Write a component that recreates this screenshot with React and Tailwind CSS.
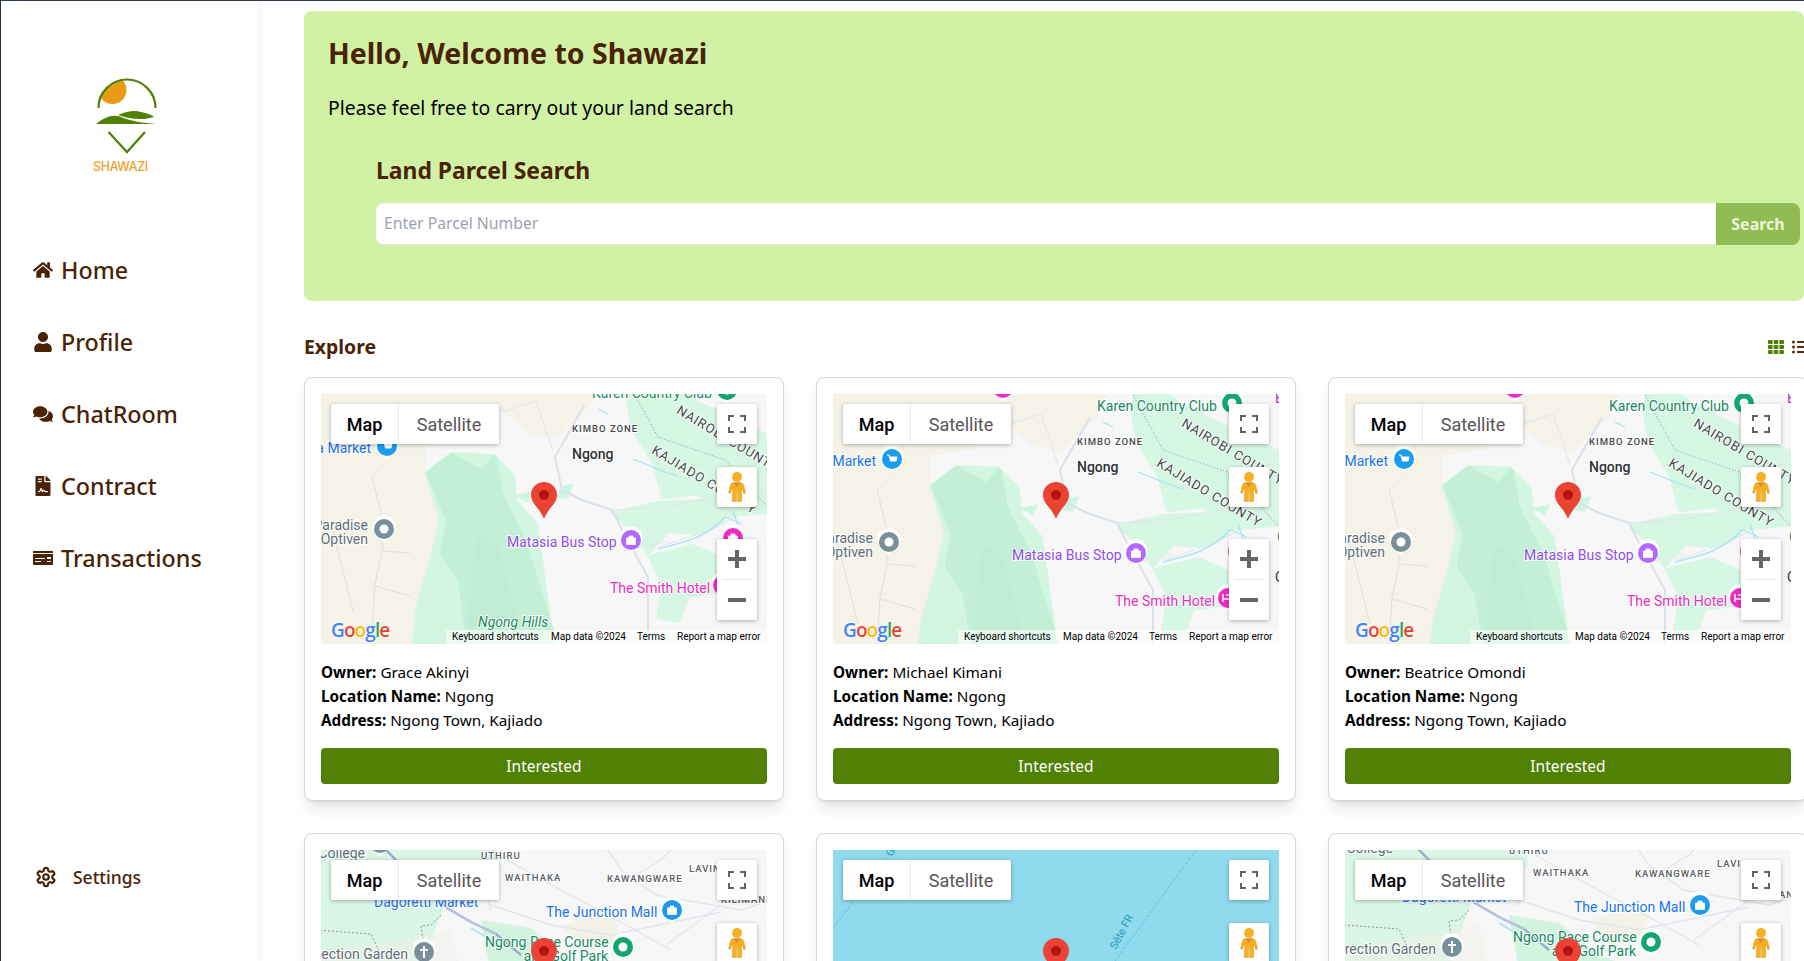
import React from "react";
import { FaHome, FaUser, FaComments, FaFileContract, FaMoneyCheck, FaTh, FaListUl } from "react-icons/fa";
import { LuSettings } from "react-icons/lu";

function Logo() {
  return (
    <div className="flex flex-col items-start pl-[92px] pt-[76px]">
      <svg width="66" height="80" viewBox="0 0 66 80">
        <defs>
          <clipPath id="sunclip"><circle cx="34" cy="31" r="28" /></clipPath>
        </defs>
        <g clipPath="url(#sunclip)"><circle cx="19.5" cy="13" r="14" fill="#e99a17" /></g>
        <path d="M5.5 31 A28 28 0 0 1 62.5 31" fill="none" stroke="#508104" strokeWidth="2.2" />
        <path d="M3 47 C12 40 20 37 28 40 C38 44 50 46 63 47 Z" fill="#508104" />
        <path d="M25 38 C34 34 42 33 48 35 C54 36 59 38 61 40 C52 43 38 43 25 38 Z" fill="#508104" />
        <path d="M15.5 55 L34 75 L52 55" fill="none" stroke="#508104" strokeWidth="2.2" />
      </svg>
      <span className="mt-[2px] font-['Inter'] text-[12.4px] font-medium leading-[16px] tracking-[-0.3px] text-[#efa128]">SHAWAZI</span>
    </div>
  );
}

const NAV = [
  [FaHome, "Home"],
  [FaUser, "Profile"],
  [FaComments, "ChatRoom"],
  [FaFileContract, "Contract"],
  [FaMoneyCheck, "Transactions"],
];

function Sidebar() {
  return (
    <aside className="relative z-10 flex h-full w-[256px] shrink-0 flex-col bg-white shadow-[4px_0_8px_rgba(0,0,0,0.04)]">
      <Logo />
      <nav className="mt-[77px] flex flex-col gap-[36px] pl-[32px]">
        {NAV.map(([Icon, label]) => (
          <div key={label} className="flex h-[36px] items-center gap-[8px] text-[#4a2306]">
            <span className="flex w-[20px] justify-center"><Icon size={20} /></span>
            <span className="text-[23.3px] font-medium leading-[36px]">{label}</span>
          </div>
        ))}
      </nav>
      <div className="mt-auto mb-[72px] flex items-center gap-[16px] pl-[34px] text-[#4a2306]">
        <LuSettings size={22} strokeWidth={2.4} />
        <span className="text-[17.5px] font-medium leading-[24px]">Settings</span>
      </div>
    </aside>
  );
}

function Poi({ x, y, color, glyph }) {
  return (
    <g transform={`translate(${x} ${y})`}>
      <path d="M-11 1 A11.5 11.5 0 1 1 11 1 C9 6 4 9 0 13.5 C-4 9 -9 6 -11 1 Z" fill="#fff" opacity="0.95" />
      <circle r="10" fill={color} />
      {glyph === "dot" && <circle r="4.5" fill="#fff" />}
      {glyph === "shop" && <path d="M-5 -4 H-3 L-1.5 2 H4 L5 -2 H-2.5" fill="#fff" stroke="#fff" strokeWidth="1" />}
      {glyph === "bag" && <path d="M-4.5 -2 H4.5 V4.5 H-4.5 Z M-2 -2 V-4 H2 V-2" fill="#fff" stroke="#fff" strokeWidth="0.8" />}
      {glyph === "cross" && <path d="M-1 -6 H1 V-3 H4 V-1 H1 V6 H-1 V-1 H-4 V-3 H-1 Z" fill="#fff" />}
      {glyph === "golf" && <circle r="4.5" fill="#fff" />}
      {glyph === "bed" && <path d="M-5 -4 V4 M-5 1 H5 V4 M-2 -3 H4 V1" fill="none" stroke="#fff" strokeWidth="1.6" />}
    </g>
  );
}

function Lbl({ x, y, c = "#5f6368", s = 14, w = 400, ls, t, i, rot, anchor }) {
  return (
    <text
      x={x}
      y={y}
      fill={c}
      fontSize={s}
      fontWeight={w}
      fontStyle={i ? "italic" : "normal"}
      letterSpacing={ls}
      textAnchor={anchor}
      transform={rot ? `rotate(${rot} ${x} ${y})` : undefined}
      dominantBaseline="central"
      stroke="#fff"
      strokeWidth="2"
      strokeOpacity="0.85"
      paintOrder="stroke"
      fontFamily="Roboto, sans-serif"
    >
      {t}
    </text>
  );
}

function NgongScene({ hills }) {
  return (
    <g>
      <rect x="-30" y="-30" width="520" height="320" fill="#f7f7f7" />
      <path d="M-30 -30 H290 L262 25 L228 58 L200 52 L180 34 L150 24 L140 55 L97 62 L97 91 L117 139 L104 169 L87 229 L82 290 H-30 Z" fill="#f5f2e8" />
      <path d="M100 92 L124 74 L165 76 L184 95 L186 120 L207 144 L227 290 L85 290 L90 229 L107 169 L114 139 Z" fill="#d2f6e2" stroke="#d2f6e2" strokeWidth="6" strokeLinejoin="round" />
      <path d="M100 92 L124 74 L154 91 L166 76 L173 113 L196 160 L224 250 L139 250 L132 200 L114 172 L120 140 Z" fill="#c3efd7" stroke="#c3efd7" strokeWidth="4" strokeLinejoin="round" />
      <path d="M150 150 L170 165 L190 240 L140 245 L145 190 Z" fill="#bce9cf" opacity="0.6" />
      <path d="M305 -30 L345 10 L450 60 L450 130 L395 135 L370 112 L335 116 L326 82 L305 48 L300 20 Z" fill="#d6f7e4" stroke="#d6f7e4" strokeWidth="4" strokeLinejoin="round" />
      <path d="M286 132 L330 122 L375 120 L395 140 L370 152 L340 150 L320 172 L300 145 Z" fill="#d6f7e4" stroke="#d6f7e4" strokeWidth="4" strokeLinejoin="round" />
      <path d="M322 176 L365 165 L395 178 L395 210 L360 215 L350 240 L330 236 L336 205 Z" fill="#d6f7e4" stroke="#d6f7e4" strokeWidth="4" strokeLinejoin="round" />
      <path d="M186 114 L205 110 L200 122 Z M235 105 L246 102 L240 118 L228 116 Z" fill="#cef5df" />
      <path d="M257 23 L227 76 L234 109 L254 119 L284 129 L300 160 L320 196 L320 250" fill="none" stroke="#d9e2ec" strokeWidth="2" strokeLinejoin="round" />
      <path d="M208 20 L225 70 M150 24 L178 30 L208 20" fill="none" stroke="#e0e5ea" strokeWidth="1" />
      <path d="M57 83 L44 96 L54 136 L55 166 L47 203 L44 250 M55 170 L82 172 M47 205 L82 215 M5 150 L25 230" fill="none" stroke="#d9dfe4" strokeWidth="1" />
      <path d="M284 129 L340 125 L395 115 L445 110 M330 166 L380 150 L410 135 M295 170 L340 160" fill="none" stroke="#e2e6ea" strokeWidth="1" />
      <path d="M330 168 C350 162 375 160 397 136 L414 143 M270 28 L280 33 M305 78 L340 92 L350 95 M405 130 L412 150" fill="none" stroke="#a6e3f5" strokeWidth="1.2" />
      <path d="M300 1 L330 56 L397 79 L448 135" fill="none" stroke="#8d9499" strokeWidth="1" strokeDasharray="1 2" />
      <Lbl x={264} y={12} c="#178a63" t="Karen Country Club" />
      <Poi x={399} y={9} color="#12a56f" glyph="golf" />
      <Poi x={170} y={-6} color="#ec2cc3" glyph="bag" />
      <Lbl x={442} y={4} c="#9334e6" t="B" />
      <Lbl x={244} y={47} c="#44484c" s={9.5} w={500} ls={1} t="KIMBO ZONE" />
      <Lbl x={244} y={73} c="#303236" s={14} w={500} t="Ngong" />
      <Lbl x={350} y={28} c="#44484c" s={13} ls={0.9} rot={31} t="NAIROBI COUNTY" />
      <Lbl x={325} y={68} c="#44484c" s={13} ls={0.9} rot={31} t="KAJIADO COUNTY" />
      <Lbl x={43} y={67} c="#1a73e8" anchor="end" t="Matasia Market" />
      <Poi x={59} y={65} color="#1a9bf0" glyph="shop" />
      <Lbl x={40} y={144} c="#5f6f78" anchor="end" t="Paradise" />
      <Lbl x={40} y={158} c="#5f6f78" anchor="end" t="Optiven" />
      <Poi x={56} y={148} color="#78909c" glyph="dot" />
      <Lbl x={179} y={161} c="#8e4fe6" t="Matasia Bus Stop" />
      <Poi x={303} y={159} color="#b367fc" glyph="bag" />
      <Lbl x={282} y={207} c="#ea2ec0" t="The Smith Hotel" />
      <Poi x={395} y={204} color="#ec2cc3" glyph="bed" />
      <Poi x={405} y={157} color="#ec2cc3" glyph="bag" />
      <Lbl x={442} y={183} c="#303236" t="Ongata" />
      <Lbl x={444} y={143} c="#178a63" t="G" />
      {hills && <Lbl x={150} y={241} c="#1f8a5f" i t="Ngong Hills" />}
    </g>
  );
}

function CityScene() {
  return (
    <g>
      <rect x="-30" y="-30" width="520" height="320" fill="#f7f7f8" />
      <path d="M-30 -30 H60 L100 0 L120 -30 H170 L180 20 L128 44 L115 78 L100 125 H-30 Z" fill="#d9f6e6" />
      <path d="M160 70 L210 78 L250 110 L290 125 H170 Z" fill="#d2f4df" />
      <path d="M243 75 L275 65 L300 70 L290 96 L255 100 Z" fill="#f4f1e6" />
      <path d="M-30 108 L130 80 L140 125 H-30 Z" fill="#f1efe6" opacity="0.5" />
      <path d="M186 10 L240 40 L300 72 L350 100 M280 -10 L300 20 L335 45 L420 60 L450 50 M345 95 L400 55 M160 28 L170 60 M315 25 L340 10 L360 -10 M170 55 L230 75 L290 85 L400 62" fill="none" stroke="#dfe6ef" strokeWidth="1.4" />
      <path d="M60 -5 L80 15 L110 45 L126 58 L150 72 L175 84 L200 105" fill="none" stroke="#9aa9d0" strokeWidth="2.4" />
      <path d="M126 58 L150 72 L175 84" fill="none" stroke="#cfd7ea" strokeWidth="1" />
      <path d="M-5 80 L50 84 L60 105 M120 65 L110 75 L100 76 L105 110" fill="none" stroke="#8d9499" strokeWidth="1" strokeDasharray="2 2" />
      <path d="M150 78 L170 90" fill="none" stroke="#a6e3f5" strokeWidth="1.5" />
      <Lbl x={44} y={3} c="#5f6f78" anchor="end" t="College" />
      <Poi x={59} y={-7} color="#78909c" glyph="dot" />
      <Lbl x={160} y={5} c="#5a5f64" s={9.5} w={500} ls={1} t="UTHIRU" />
      <Lbl x={184} y={27} c="#5a5f64" s={9.5} w={500} ls={1} t="WAITHAKA" />
      <Lbl x={286} y={28} c="#5a5f64" s={9.5} w={500} ls={1} t="KAWANGWARE" />
      <Lbl x={368} y={18} c="#5a5f64" s={9.5} w={500} ls={1} t="LAVINGTON" />
      <Lbl x={400} y={49} c="#5a5f64" s={9.5} w={500} ls={1} t="KILIMANI" />
      <Lbl x={53} y={52} c="#1a73e8" t="Dagoretti Market" />
      <Lbl x={225} y={62} c="#1a73e8" t="The Junction Mall" />
      <Poi x={351} y={60} color="#1a9bf0" glyph="bag" />
      <Lbl x={164} y={92} c="#178a63" t="Ngong Race Course" />
      <Lbl x={287} y={106} c="#178a63" anchor="end" t="and Golf Park" />
      <Poi x={302} y={97} color="#12a56f" glyph="golf" />
      <Lbl x={87} y={104} c="#5f6f78" anchor="end" t="Resurrection Garden" />
      <Poi x={103} y={102} color="#78909c" glyph="cross" />
    </g>
  );
}

function WaterScene() {
  return (
    <g>
      <rect x="-30" y="-30" width="520" height="320" fill="#90daee" />
      <path d="M363 0 L282 111 M295 120 L250 200 M59 0 L1 77" fill="none" stroke="#5cc0d8" strokeWidth="1" strokeDasharray="3 2" />
      <text x="283" y="100" fontSize="11" fill="#2a9fbd" fontFamily="Roboto, sans-serif" transform="rotate(-62 283 100)">Sête FR</text>
      <text x="59" y="7" fontSize="11" fill="#2a9fbd" fontFamily="Roboto, sans-serif" transform="rotate(-62 59 7)">G</text>
    </g>
  );
}

function Pin() {
  return (
    <svg className="absolute left-[210px] top-[88px]" width="26" height="37" viewBox="0 0 26 37">
      <path d="M13 0 C5.8 0 0 5.8 0 13 C0 22 9 26 13 37 C17 26 26 22 26 13 C26 5.8 20.2 0 13 0 Z" fill="#ea4335" />
      <circle cx="13" cy="13" r="5" fill="#b31412" />
    </svg>
  );
}

function Pegman() {
  return (
    <svg width="18" height="30" viewBox="0 0 18 30">
      <circle cx="9" cy="5" r="5" fill="#f6b026" />
      <path d="M6 10.5 H12 C14 10.5 15 11.5 15.6 13 L17.5 21 L15.8 21.5 L13.6 15.5 V29.5 H9.6 V21 H8.4 V29.5 H4.4 V15.5 L2.2 21.5 L0.5 21 L2.4 13 C3 11.5 4 10.5 6 10.5 Z" fill="#f6b026" stroke="#c98a12" strokeWidth="0.4" />
      <path d="M5.5 10.5 L9 15 L12.5 10.5 Z" fill="#dd8a2c" />
    </svg>
  );
}

function MapBox({ scene, tx = 0, ty = 0 }) {
  return (
    <div className="relative h-[250px] w-full overflow-hidden bg-[#f7f7f7] font-['Roboto']">
      <svg className="absolute left-0 top-0" width="446" height="250" viewBox="0 0 446 250">
        <g transform={`translate(${tx} ${ty})`}>
          {scene === "ngong" && <NgongScene hills={ty < 0} />}
          {scene === "city" && <CityScene />}
          {scene === "water" && <WaterScene />}
        </g>
      </svg>
      <Pin />
      <div className="absolute left-[10px] top-[10px] flex h-[40px] overflow-hidden rounded-[2px] bg-white text-[18px] shadow-[0_1px_4px_rgba(0,0,0,0.3)]">
        <span className="flex w-[68px] items-center justify-center border-r border-[#ededed] font-medium text-black">Map</span>
        <span className="flex w-[100px] items-center justify-center text-[#565656]">Satellite</span>
      </div>
      <div className="absolute left-[396px] top-[10px] flex h-[40px] w-[40px] items-center justify-center rounded-[2px] bg-white shadow-[0_1px_4px_rgba(0,0,0,0.3)]">
        <svg width="18" height="18" viewBox="0 0 18 18" fill="none" stroke="#666" strokeWidth="2">
          <path d="M1 6 V1 H6 M12 1 H17 V6 M17 12 V17 H12 M6 17 H1 V12" />
        </svg>
      </div>
      <div className="absolute left-[396px] top-[73px] flex h-[40px] w-[40px] items-center justify-center rounded-[2px] bg-white shadow-[0_1px_4px_rgba(0,0,0,0.3)]">
        <Pegman />
      </div>
      <div className="absolute left-[396px] top-[145px] flex h-[81px] w-[40px] flex-col items-center rounded-[2px] bg-white shadow-[0_1px_4px_rgba(0,0,0,0.3)]">
        <span className="flex h-[40px] items-center justify-center">
          <svg width="18" height="18" viewBox="0 0 18 18" fill="#666"><path d="M7 0 H11 V7 H18 V11 H11 V18 H7 V11 H0 V7 H7 Z" /></svg>
        </span>
        <span className="h-px w-[30px] bg-[#e6e6e6]" />
        <span className="flex h-[40px] items-center justify-center">
          <svg width="18" height="18" viewBox="0 0 18 18" fill="#666"><path d="M0 7 H18 V11 H0 Z" /></svg>
        </span>
      </div>
      <div className="absolute left-[10px] bottom-[4px] font-['Open_Sans'] text-[19px] font-semibold leading-[20px] tracking-[-0.9px] [text-shadow:0_0_2px_#fff]">
        <span className="text-[#4285f4]">G</span>
        <span className="text-[#ea4335]">o</span>
        <span className="text-[#fbbc05]">o</span>
        <span className="text-[#4285f4]">g</span>
        <span className="text-[#34a853]">l</span>
        <span className="text-[#ea4335]">e</span>
      </div>
      <div className="absolute bottom-0 right-0 flex h-[14px] w-[321px] items-center bg-white/60 pl-[6px] text-[10px] leading-[14px] text-black">
        <span className="w-[99px]">Keyboard shortcuts</span>
        <span className="w-[86px]">Map data ©2024</span>
        <span className="w-[40px]">Terms</span>
        <span>Report a map error</span>
      </div>
    </div>
  );
}

function Card({ owner, scene, tx, ty }) {
  return (
    <div className="rounded-[8px] border border-[#d4d4d8] bg-white p-4 shadow-lg">
      <MapBox scene={scene} tx={tx} ty={ty} />
      <div className="mt-[16px] text-[15.3px] leading-[24px] text-black">
        <p><b className="font-bold">Owner:</b> {owner}</p>
        <p><b className="font-bold">Location Name:</b> Ngong</p>
        <p><b className="font-bold">Address:</b> Ngong Town, Kajiado</p>
      </div>
      <button className="mt-[16px] h-[36px] w-full rounded-[4px] bg-[#508104] pt-[2px] text-[15.5px] text-white">Interested</button>
    </div>
  );
}

export default function App() {
  return (
    <div className="flex h-screen w-screen flex-col overflow-hidden bg-white font-['Noto_Sans',sans-serif]">
      <div className="h-px w-full shrink-0 bg-[#2f3e4e]" />
      <div className="flex min-h-0 flex-1">
        <div className="w-px shrink-0 bg-[#1e3448]" />
        <Sidebar />
        <main className="min-w-0 flex-1 overflow-hidden pl-[47px] pt-[10px]">
          <section className="h-[290px] w-[1500px] rounded-[8px] bg-[#d1f2a5] pl-[24px] pt-[18px]">
            <h1 className="text-[28.5px] font-bold leading-[48px] text-[#4a2306]">Hello, Welcome to Shawazi</h1>
            <p className="mt-[17px] text-[19.4px] leading-[28px] text-black">Please feel free to carry out your land search</p>
            <div className="ml-[48px] mt-[31px]">
              <h2 className="text-[22.9px] font-bold leading-[36px] text-[#4a2306]">Land Parcel Search</h2>
              <div className="mt-[14px] flex h-[42px] w-[1424px]">
                <div className="flex flex-1 items-center rounded-l-[8px] border-b border-[#e5e7eb] bg-white pl-[8px] text-[15.75px] text-[#9ca3af]">Enter Parcel Number</div>
                <button className="w-[84px] rounded-r-[8px] bg-[#90bb55] text-[16px] font-bold text-[#e9f7d5]">Search</button>
              </div>
            </div>
          </section>
          <div className="mt-[28px] flex h-[36px] w-[1504px] items-center justify-between">
            <span className="text-[19.4px] font-bold text-[#4a2306]">Explore</span>
            <span className="flex items-center gap-[8px]">
              <FaTh size={16} className="text-[#508104]" />
              <FaListUl size={16} className="text-[#5a2d06]" />
            </span>
          </div>
          <div className="mt-[12px] grid w-[1504px] grid-cols-[480px_480px_480px] gap-x-[32px] gap-y-[32px]">
            <Card owner="Grace Akinyi" scene="ngong" tx={7} ty={-13} />
            <Card owner="Michael Kimani" scene="ngong" />
            <Card owner="Beatrice Omondi" scene="ngong" />
            <Card owner="Peter Mwangi" scene="city" />
            <Card owner="Sarah Wanjiku" scene="water" />
            <Card owner="David Otieno" scene="city" tx={4} ty={-5} />
          </div>
        </main>
      </div>
    </div>
  );
}
